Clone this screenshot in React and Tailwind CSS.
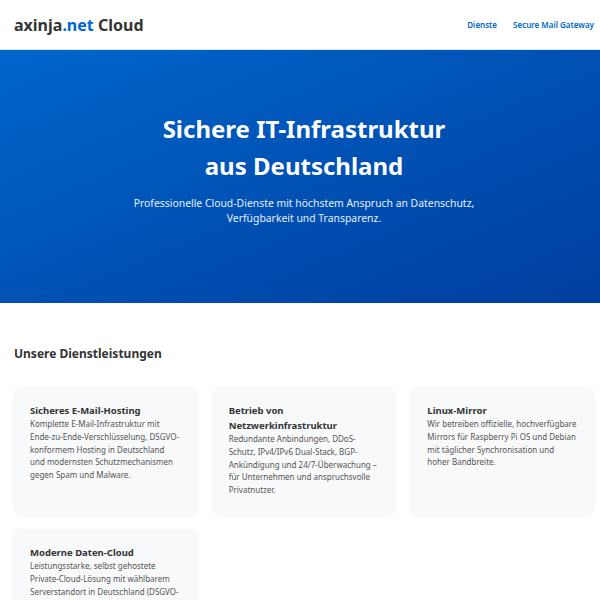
import React from "react";

const services = [
  {
    title: "Sicheres E-Mail-Hosting",
    text: "Komplette E-Mail-Infrastruktur mit Ende-zu-Ende-Verschlüsselung, DSGVO-konformem Hosting in Deutschland und modernsten Schutzmechanismen gegen Spam und Malware.",
  },
  {
    title: "Betrieb von Netzwerkinfrastruktur",
    text: "Redundante Anbindungen, DDoS-Schutz, IPv4/IPv6 Dual-Stack, BGP-Ankündigung und 24/7-Überwachung – für Unternehmen und anspruchsvolle Privatnutzer.",
  },
  {
    title: "Linux-Mirror",
    text: "Wir betreiben offizielle, hochverfügbare Mirrors für Raspberry Pi OS und Debian mit täglicher Synchronisation und hoher Bandbreite.",
  },
  {
    title: "Moderne Daten-Cloud",
    text: "Leistungsstarke, selbst gehostete Private-Cloud-Lösung mit wählbarem Serverstandort in Deutschland (DSGVO-konform) und flexiblen Speicheroptionen.",
  },
];

const App = () => {
  return (
    <div className="min-h-screen bg-white font-['Noto_Sans',sans-serif] text-[#333]">
      {/* Header */}
      <header className="h-[50px] flex items-center justify-between pl-[14px] pr-[6px] border-b border-[#dde3ea]">
        <div className="text-[16px] font-bold text-[#333]">
          axinja<span className="text-[#0066cc]">.net</span> Cloud
        </div>
        <nav className="flex items-center gap-[16px] text-[8px] font-semibold text-[#0066cc]">
          <a href="#">Dienste</a>
          <a href="#">Secure Mail Gateway</a>
        </nav>
      </header>

      {/* Hero */}
      <section className="h-[253px] flex flex-col items-center justify-center text-center text-white bg-gradient-to-br from-[#0066cc] to-[#003e9e] pl-[8px] pb-[18px]">
        <h1 className="text-[24px] font-bold leading-[37px]">
          Sichere IT-Infrastruktur
          <br />
          aus Deutschland
        </h1>
        <p className="mt-[12px] text-[10.4px] leading-[15px] text-[#e6efff] max-w-[380px]">
          Professionelle Cloud-Dienste mit höchstem Anspruch an Datenschutz, Verfügbarkeit und Transparenz.
        </p>
      </section>

      {/* Services */}
      <section className="pl-[14px] pr-[6px] pt-[41px]">
        <h2 className="text-[12px] font-bold text-[#333] leading-[20px]">Unsere Dienstleistungen</h2>
        <div className="mt-[23px] grid grid-cols-3 gap-x-[16px] gap-y-[14px]">
          {services.map((s) => (
            <div key={s.title} className="bg-[#f8f9fa] rounded-[8px] shadow-[0_1px_4px_rgba(0,0,0,0.05)] px-[16px] pt-[16px] pb-[18px]">
              <h3 className="text-[9.5px] font-bold leading-[15px] text-[#333]">{s.title}</h3>
              <p className="text-[8px] leading-[12.8px] text-[#555]">{s.text}</p>
            </div>
          ))}
        </div>
      </section>
    </div>
  );
};

export default App;
